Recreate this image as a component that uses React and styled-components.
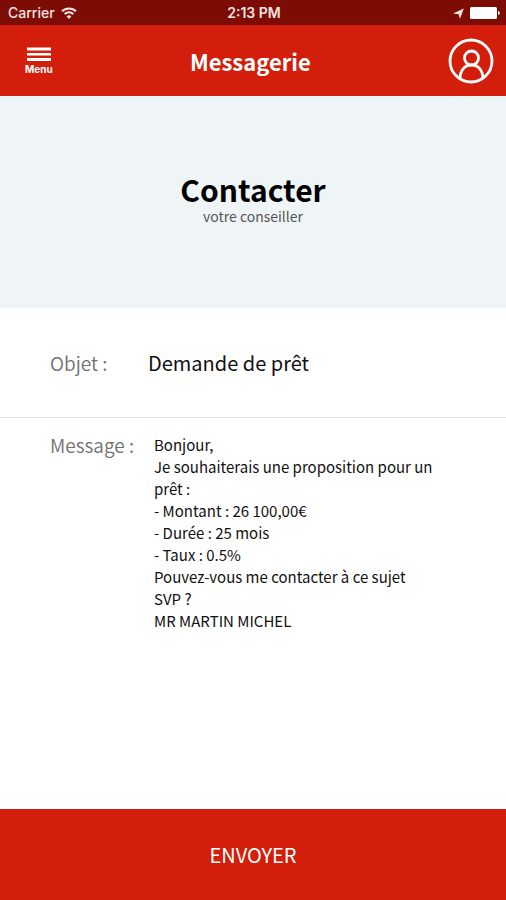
import React, { useState } from 'react';
import styled, { createGlobalStyle } from 'styled-components';

const GlobalStyle = createGlobalStyle`
  *, *::before, *::after {
    box-sizing: border-box;
  }
  body {
    margin: 0;
    background-color: #fff;
    color: #111;
    font-family: "Noto Sans CJK JP", "Noto Sans", sans-serif;
  }
`;
const Screen = styled('div')`
  display: flex;
  flex-direction: column;
  min-height: 100vh;
`;
const StatusBar = styled('div')`
  display: grid;
  grid-template-columns: 1fr auto 1fr;
  align-items: center;
  height: 25px;
  padding: 1px 6px 0 8px;
  background-color: #7d0c05;
  color: #f9e4e2;
  font-family: Inter, "Liberation Sans", sans-serif;
  font-size: 14px;
  font-weight: 500;
  line-height: 16px;
`;
const StatusGroup = styled('div')`
  display: flex;
  align-items: center;
  justify-content: ${(props) => props.$end ? 'flex-end' : 'flex-start'};
  gap: 6px;
`;
const Time = styled('span')`
  font-weight: 600;
`;
const Header = styled('header')`
  display: flex;
  align-items: center;
  justify-content: space-between;
  height: 71px;
  padding: 0 12px 0 25px;
  background-color: #d21e0a;
  color: white;
`;
const IconButton = styled('button')`
  display: flex;
  flex-direction: column;
  align-items: center;
  border: 0;
  padding: 0;
  background: none;
  color: inherit;
  font-family: Inter, "Liberation Sans", sans-serif;
  font-size: 10px;
  font-weight: 700;
  line-height: 12px;
  cursor: pointer;
`;
const Title = styled('h1')`
  margin: 0;
  font-size: 22px;
  font-weight: 700;
  line-height: 28px;
`;
const Banner = styled('section')`
  display: flex;
  flex-direction: column;
  align-items: center;
  justify-content: center;
  height: 212px;
  padding-bottom: 8px;
  background-color: #eff5f6;
`;
const BannerTitle = styled('h2')`
  margin: 0;
  color: #000;
  font-size: 30px;
  font-weight: 700;
  line-height: 36px;
`;
const BannerText = styled('p')`
  margin: 0;
  color: #555;
  font-size: 14px;
  line-height: 18px;
`;
const Form = styled('form')`
  display: flex;
  flex-direction: column;
  flex: 1;
`;
const SubjectRow = styled('div')`
  display: flex;
  align-items: center;
  height: 110px;
  padding: 0 72px 0 50px;
  border-bottom: 1px solid #e6e6e6;
`;
const MessageRow = styled('div')`
  display: flex;
  flex: 1;
  padding: 16px 72px 16px 50px;
`;
const Label = styled('label')`
  flex: 0 0 ${(props) => props.$width};
  color: #707070;
  font-size: 19px;
  font-weight: 350;
  line-height: 22px;
`;
const Input = styled('input')`
  flex: 1;
  min-width: 0;
  border: 0;
  padding: 0;
  outline: 0;
  background: none;
  color: inherit;
  font-family: inherit;
  font-size: 20px;
  line-height: 28px;
`;
const TextArea = styled('textarea')`
  flex: 1;
  min-width: 0;
  border: 0;
  padding: 0;
  outline: 0;
  resize: none;
  overflow: hidden;
  background: none;
  color: inherit;
  font-family: inherit;
  font-size: 15px;
  line-height: 22px;
`;
const SubmitButton = styled('button')`
  height: 91px;
  border: 0;
  background-color: #d21e0a;
  color: white;
  font-family: inherit;
  font-size: 20px;
  line-height: 28px;
  cursor: pointer;
`;

const WifiIcon = () => (
  <svg width="16" height="12" viewBox="0 0 16 12" fill="none" stroke="currentColor" strokeWidth="2" aria-hidden="true">
    <path d="M1 4.3a10 10 0 0 1 14 0" />
    <path d="M3.6 7.1a6.2 6.2 0 0 1 8.8 0" />
    <path d="M8 12 5.6 9.4a3.4 3.4 0 0 1 4.8 0Z" fill="currentColor" stroke="none" />
  </svg>
);

const LocationIcon = () => (
  <svg width="11" height="11" viewBox="0 0 11 11" fill="currentColor" aria-hidden="true">
    <path d="M10.8.4 7 10.8 5.6 6.2 0 5.6Z" />
  </svg>
);

const BatteryIcon = () => (
  <svg width="30" height="12" viewBox="0 0 30 12" fill="#fff" aria-hidden="true">
    <rect width="27" height="12" rx="1.5" />
    <path d="M28 4c1.3.3 1.8 1 1.8 2s-.5 1.7-1.8 2Z" />
  </svg>
);

const MenuIcon = () => (
  <svg width="24" height="16" viewBox="0 0 24 16" fill="currentColor" aria-hidden="true">
    <path d="M0 .5h24v3H0zM0 6h24v2.5H0zM0 11h24v3H0z" />
  </svg>
);

const ProfileIcon = () => (
  <svg width="46" height="46" viewBox="0 0 46 46" fill="none" stroke="currentColor" strokeWidth="2.8" aria-hidden="true">
    <circle cx="23" cy="23" r="21" />
    <circle cx="23.5" cy="20" r="7" />
    <path d="M12 41c0-8.5 4.5-14 11.5-14S35 32.500 35 41" />
  </svg>
);

const defaultMessage = `Bonjour,
Je souhaiterais une proposition pour un prêt :
- Montant : 26 100,00€
- Durée : 25 mois
- Taux : 0.5%
Pouvez-vous me contacter à ce sujet SVP ?
MR MARTIN MICHEL`;

const App = () => {
  const [subject, setSubject] = useState('Demande de prêt');
  const [message, setMessage] = useState(defaultMessage);

  const onSubmit = (e) => {
    e.preventDefault();
  }

  return(
  <Screen>
    <GlobalStyle />
    <StatusBar>
      <StatusGroup>
        <span>Carrier</span>
        <WifiIcon />
      </StatusGroup>
      <Time>2:13 PM</Time>
      <StatusGroup $end>
        <LocationIcon />
        <BatteryIcon />
      </StatusGroup>
    </StatusBar>
    <Header>
      <IconButton type="button">
        <MenuIcon />
        Menu
      </IconButton>
      <Title>Messagerie</Title>
      <IconButton type="button" aria-label="Profil">
        <ProfileIcon />
      </IconButton>
    </Header>
    <Banner>
      <BannerTitle>Contacter</BannerTitle>
      <BannerText>votre conseiller</BannerText>
    </Banner>
    <Form onSubmit={onSubmit}>
      <SubjectRow>
        <Label htmlFor="subject" $width="98px">Objet :</Label>
        <Input id="subject" value={subject} onChange={(e) => setSubject(e.target.value)} />
      </SubjectRow>
      <MessageRow>
        <Label htmlFor="message" $width="104px">Message :</Label>
        <TextArea id="message" value={message} onChange={(e) => setMessage(e.target.value)} />
      </MessageRow>
      <SubmitButton type="submit">ENVOYER</SubmitButton>
    </Form>
  </Screen>
  )
};

export default App;
